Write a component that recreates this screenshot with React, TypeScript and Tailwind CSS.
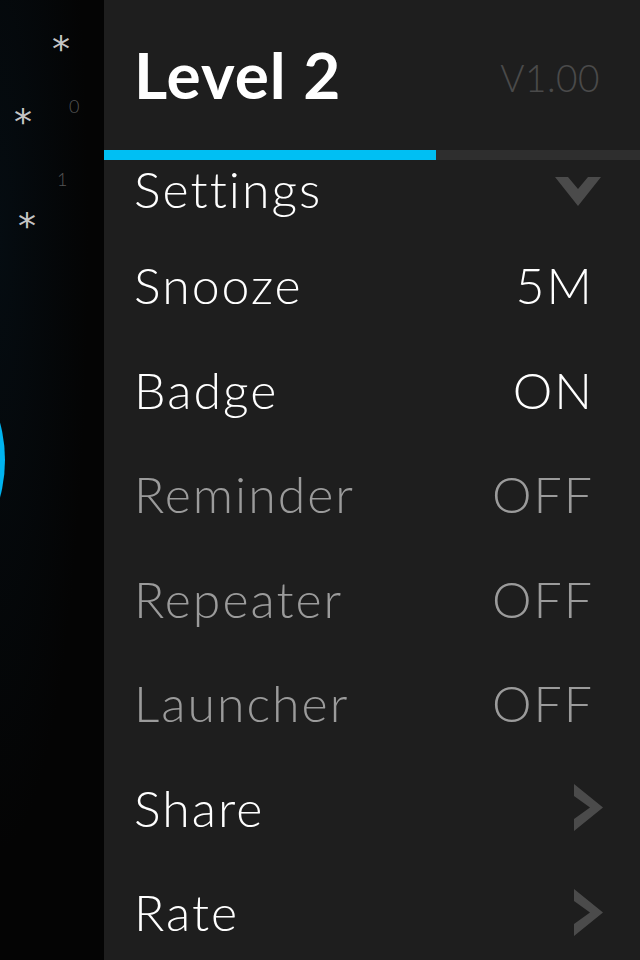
import React from "react";

const font = { fontFamily: "Lato, 'Open Sans', sans-serif" };

function ChevronDown() {
  return (
    <svg width="46" height="29" viewBox="0 0 46 29" className="mt-[4px]">
      <polygon points="0,0 13,0 23,12 33,0 46,0 23,29" fill="#4b4b4b" />
    </svg>
  );
}

function ChevronRight() {
  return (
    <svg width="29" height="47" viewBox="0 0 29 47">
      <polygon points="0,0 29,23.5 0,47 0,35 16,23.5 0,12" fill="#4b4b4b" />
    </svg>
  );
}

type Row = { label: string; value?: string; dim?: boolean; arrow?: boolean };

const rows: Row[] = [
  { label: "Snooze", value: "5M" },
  { label: "Badge", value: "ON" },
  { label: "Reminder", value: "OFF", dim: true },
  { label: "Repeater", value: "OFF", dim: true },
  { label: "Launcher", value: "OFF", dim: true },
  { label: "Share", arrow: true },
  { label: "Rate", arrow: true },
];

export default function App() {
  return (
    <div className="flex w-[640px] h-[960px] overflow-hidden bg-[#1e1e1e]" style={font}>
      <div className="relative w-[104px] shrink-0 h-full overflow-hidden bg-[radial-gradient(ellipse_at_0%_25%,#050c11_0%,#040404_60%)]">
        <span className="absolute left-[52px] top-[31px] text-[36px] leading-none text-[#c4c4c4]" style={{ fontFamily: "'DejaVu Sans', sans-serif" }}>*</span>
        <span className="absolute left-[14px] top-[104px] text-[36px] leading-none text-[#c4c4c4]" style={{ fontFamily: "'DejaVu Sans', sans-serif" }}>*</span>
        <span className="absolute left-[18px] top-[208px] text-[36px] leading-none text-[#c4c4c4]" style={{ fontFamily: "'DejaVu Sans', sans-serif" }}>*</span>
        <span className="absolute left-[69px] top-[97px] text-[18px] font-light leading-none text-[#555555]">0</span>
        <span className="absolute left-[57px] top-[170px] text-[18px] font-light leading-none text-[#555555]">1</span>
        <div className="absolute left-[-281px] top-[317px] w-[286px] h-[286px] rounded-full bg-[#00b4f0]" />
      </div>
      <div className="flex-1 flex flex-col h-full overflow-hidden">
        <div className="h-[150px] shrink-0 flex items-start justify-between pl-[30px] pr-[40px] pt-[35px]">
          <span className="text-[64px] font-bold leading-[80px] text-white tracking-[1px]">Level 2</span>
          <span className="text-[37px] font-light leading-[80px] text-[#4a4a4a] tracking-[0.5px] mt-[3px]">V1.00</span>
        </div>
        <div className="flex h-[10px] shrink-0">
          <div className="w-[332px] bg-[#00bff3]" />
          <div className="flex-1 bg-[#2e2e2e]" />
        </div>
        <div className="h-[58px] mb-[15px] shrink-0 flex items-center justify-between pl-[30px] pr-[39px]">
          <span className="text-[50px] font-light leading-none text-white tracking-[2px]">Settings</span>
          <ChevronDown />
        </div>
        {rows.map((r) => (
          <div
            key={r.label}
            className={`h-[104.5px] shrink-0 flex items-center justify-between pl-[30px] ${r.arrow ? "pr-[37px]" : "pr-[46px]"}`}
          >
            <span className={`text-[50px] font-light leading-none tracking-[2px] ${r.dim ? "text-[#9b9b9b]" : "text-white"}`}>{r.label}</span>
            {r.arrow ? (
              <ChevronRight />
            ) : (
              <span className={`text-[50px] font-light leading-none tracking-[2px] ${r.dim ? "text-[#9b9b9b]" : "text-white"}`}>{r.value}</span>
            )}
          </div>
        ))}
      </div>
    </div>
  );
}
